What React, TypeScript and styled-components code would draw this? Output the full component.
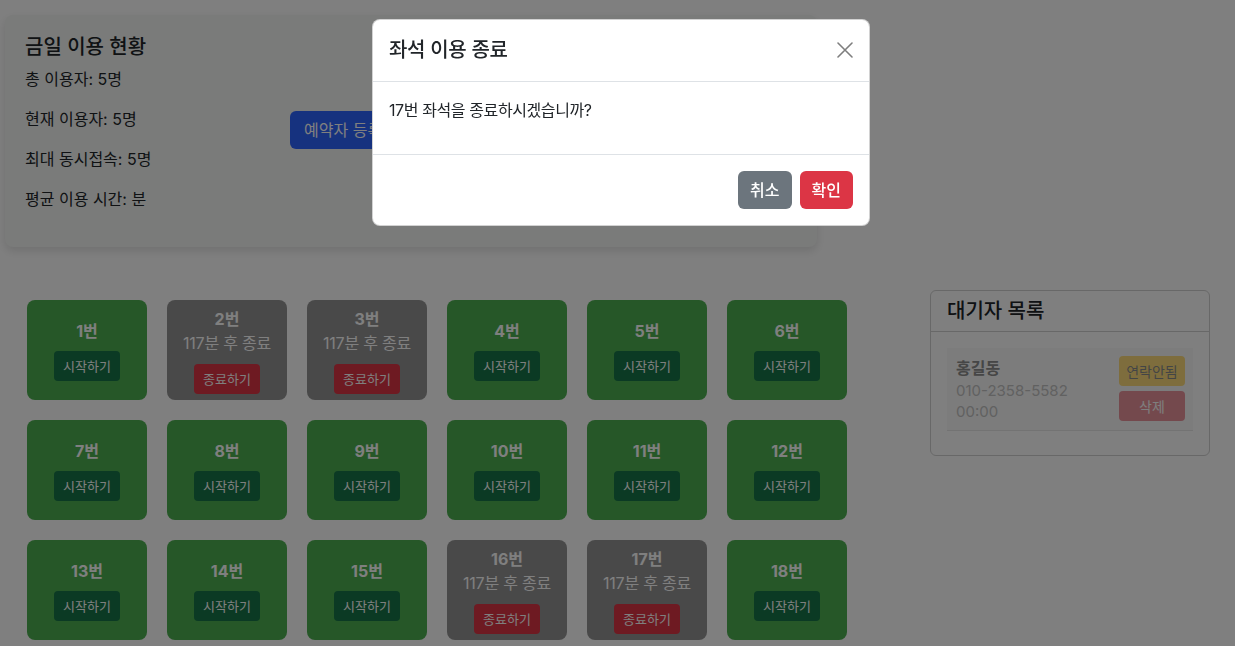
import React from "react";
import styled, { createGlobalStyle } from "styled-components";

const GlobalStyle = createGlobalStyle`
  html, body { margin: 0; padding: 0; }
  body {
    font-family: Inter, "Noto Sans CJK KR", "Noto Sans", sans-serif;
    color: #212529;
    background: #ffffff;
    font-size: 16px;
    line-height: 1.5;
  }
  * { box-sizing: border-box; }
`;

const Page = styled.div`
  padding: 15px 0 0 5px;
  width: 1235px;
  height: 646px;
  overflow: hidden;
`;

const StatsCard = styled.section`
  width: 812px;
  padding: 20px;
  background: #f4f6f4;
  border-radius: 8px;
  box-shadow: 0 4px 10px rgba(0, 0, 0, 0.12);
  display: flex;
  align-items: center;
  gap: 20px;
`;

const StatsCol = styled.div`
  width: 245px;
`;

const StatsTitle = styled.h3`
  margin: 0 0 8px;
  font-size: 20px;
  font-weight: 500;
  line-height: 24px;
`;

const StatLine = styled.p`
  margin: 0 0 16px;
  font-size: 16px;
  line-height: 24px;
`;

const PrimaryButton = styled.button`
  height: 38px;
  margin-top: -2px;
  padding: 0 14px;
  border: none;
  border-radius: 6px;
  background: #2c64ff;
  color: #fff;
  font: inherit;
  font-size: 16px;
`;

const BottomRow = styled.div`
  display: flex;
  align-items: flex-start;
  margin-top: 43px;
`;

const SeatGrid = styled.div`
  margin: 10px 0 0 22px;
  display: grid;
  grid-template-columns: repeat(6, 120px);
  grid-auto-rows: 100px;
  gap: 20px;
`;

const Seat = styled.div<{ $busy: boolean }>`
  border-radius: 8px;
  background: ${(p) => (p.$busy ? "#939393" : "#4caf50")};
  color: #fff;
  display: flex;
  flex-direction: column;
  align-items: center;
  justify-content: center;
`;

const SeatNo = styled.div`
  font-size: 16px;
  font-weight: 700;
  line-height: 24px;
`;

const SeatInfo = styled.div`
  font-size: 16px;
  line-height: 24px;
  letter-spacing: -0.2px;
`;

const SeatButton = styled.button<{ $variant: "start" | "end"; $gap: number }>`
  margin-top: ${(p) => p.$gap}px;
  height: 30px;
  padding: 0 9px;
  border: none;
  border-radius: 4px;
  background: ${(p) => (p.$variant === "start" ? "#167548" : "#dc3545")};
  color: #fff;
  font: inherit;
  font-size: 13px;
  line-height: 30px;
`;

const WaitCard = styled.section`
  margin-left: 83px;
  width: 280px;
  border: 1px solid #d0d0d0;
  border-radius: 6px;
  overflow: hidden;
  background: #fff;
`;

const WaitHeader = styled.div`
  padding: 8px 16px;
  border-bottom: 1px solid #d0d0d0;
`;

const WaitTitle = styled.h5`
  margin: 0;
  font-size: 20px;
  font-weight: 500;
  line-height: 24px;
`;

const WaitBody = styled.div`
  padding: 16px 16px 24px;
`;

const WaitItem = styled.div`
  display: flex;
  justify-content: space-between;
  padding: 8px;
  background: #f9f9f9;
  border-bottom: 1px solid #e6e6e6;
`;

const WaitInfo = styled.div`
  padding-left: 1px;
`;

const WaitName = styled.div`
  font-size: 16px;
  font-weight: 700;
  line-height: 24px;
  color: #8c8c8c;
`;

const WaitDetail = styled.div`
  font-size: 15px;
  line-height: 21px;
  color: #c2c2c2;
`;

const WaitActions = styled.div`
  display: flex;
  flex-direction: column;
  gap: 5px;
  width: 66px;
`;

const WaitButton = styled.button<{ $variant: "warn" | "danger" }>`
  height: 30px;
  border: none;
  border-radius: 4px;
  padding: 0;
  font: inherit;
  font-size: 14px;
  opacity: 0.52;
  background: ${(p) => (p.$variant === "warn" ? "#ffc107" : "#dc3545")};
  color: ${(p) => (p.$variant === "warn" ? "#212529" : "#fff")};
`;

const Backdrop = styled.div`
  position: fixed;
  inset: 0;
  background: rgba(0, 0, 0, 0.5);
`;

const Modal = styled.div`
  position: fixed;
  top: 19px;
  left: 372px;
  width: 498px;
  background: #fff;
  border: 1px solid rgba(0, 0, 0, 0.175);
  border-radius: 8px;
  overflow: hidden;
`;

const ModalHeader = styled.div`
  display: flex;
  align-items: center;
  justify-content: space-between;
  padding: 15px 16px 16px;
  border-bottom: 1px solid #dee2e6;
`;

const ModalTitle = styled.h5`
  margin: 0;
  font-size: 20px;
  font-weight: 500;
  line-height: 30px;
  letter-spacing: -0.3px;
`;

const CloseButton = styled.button`
  width: 16px;
  height: 16px;
  padding: 0;
  border: none;
  background: transparent;
  display: flex;
  opacity: 0.5;
`;

const ModalBody = styled.div`
  padding: 16px;
`;

const ModalText = styled.p`
  margin: 0 0 16px;
  font-size: 16px;
  line-height: 24px;
  letter-spacing: -0.4px;
`;

const ModalFooter = styled.div`
  display: flex;
  justify-content: flex-end;
  gap: 8px;
  padding: 16px;
  border-top: 1px solid #dee2e6;
`;

const ModalButton = styled.button<{ $variant: "secondary" | "danger" }>`
  height: 38px;
  padding: 0 12px;
  border: none;
  border-radius: 6px;
  background: ${(p) => (p.$variant === "secondary" ? "#6c757d" : "#dc3545")};
  color: #fff;
  font: inherit;
  font-size: 16px;
  font-weight: 500;
`;

type SeatData = { no: number; busy: boolean };
const busySeats = [2, 3, 16, 17];
const seats: SeatData[] = Array.from({ length: 18 }, (_, i) => ({
  no: i + 1,
  busy: busySeats.includes(i + 1),
}));

export default function App() {
  return (
    <>
      <GlobalStyle />
      <Page>
        <StatsCard>
          <StatsCol>
            <StatsTitle>금일 이용 현황</StatsTitle>
            <StatLine>총 이용자: 5명</StatLine>
            <StatLine>현재 이용자: 5명</StatLine>
            <StatLine>최대 동시접속: 5명</StatLine>
            <StatLine>평균 이용 시간: 분</StatLine>
          </StatsCol>
          <PrimaryButton>예약자 등록</PrimaryButton>
        </StatsCard>
        <BottomRow>
          <SeatGrid>
            {seats.map((s) => (
              <Seat key={s.no} $busy={s.busy}>
                <SeatNo>{s.no}번</SeatNo>
                {s.busy && <SeatInfo>117분 후 종료</SeatInfo>}
                <SeatButton $variant={s.busy ? "end" : "start"} $gap={s.busy ? 9 : 8}>
                  {s.busy ? "종료하기" : "시작하기"}
                </SeatButton>
              </Seat>
            ))}
          </SeatGrid>
          <WaitCard>
            <WaitHeader>
              <WaitTitle>대기자 목록</WaitTitle>
            </WaitHeader>
            <WaitBody>
              <WaitItem>
                <WaitInfo>
                  <WaitName>홍길동</WaitName>
                  <WaitDetail>010-2358-5582</WaitDetail>
                  <WaitDetail>00:00</WaitDetail>
                </WaitInfo>
                <WaitActions>
                  <WaitButton $variant="warn">연락안됨</WaitButton>
                  <WaitButton $variant="danger">삭제</WaitButton>
                </WaitActions>
              </WaitItem>
            </WaitBody>
          </WaitCard>
        </BottomRow>
      </Page>
      <Backdrop />
      <Modal>
        <ModalHeader>
          <ModalTitle>좌석 이용 종료</ModalTitle>
          <CloseButton aria-label="닫기">
            <svg width="16" height="16" viewBox="0 0 16 16">
              <path d="M1 1 L15 15 M15 1 L1 15" stroke="#000" strokeWidth="1.6" strokeLinecap="round" />
            </svg>
          </CloseButton>
        </ModalHeader>
        <ModalBody>
          <ModalText>17번 좌석을 종료하시겠습니까?</ModalText>
        </ModalBody>
        <ModalFooter>
          <ModalButton $variant="secondary">취소</ModalButton>
          <ModalButton $variant="danger">확인</ModalButton>
        </ModalFooter>
      </Modal>
    </>
  );
}
